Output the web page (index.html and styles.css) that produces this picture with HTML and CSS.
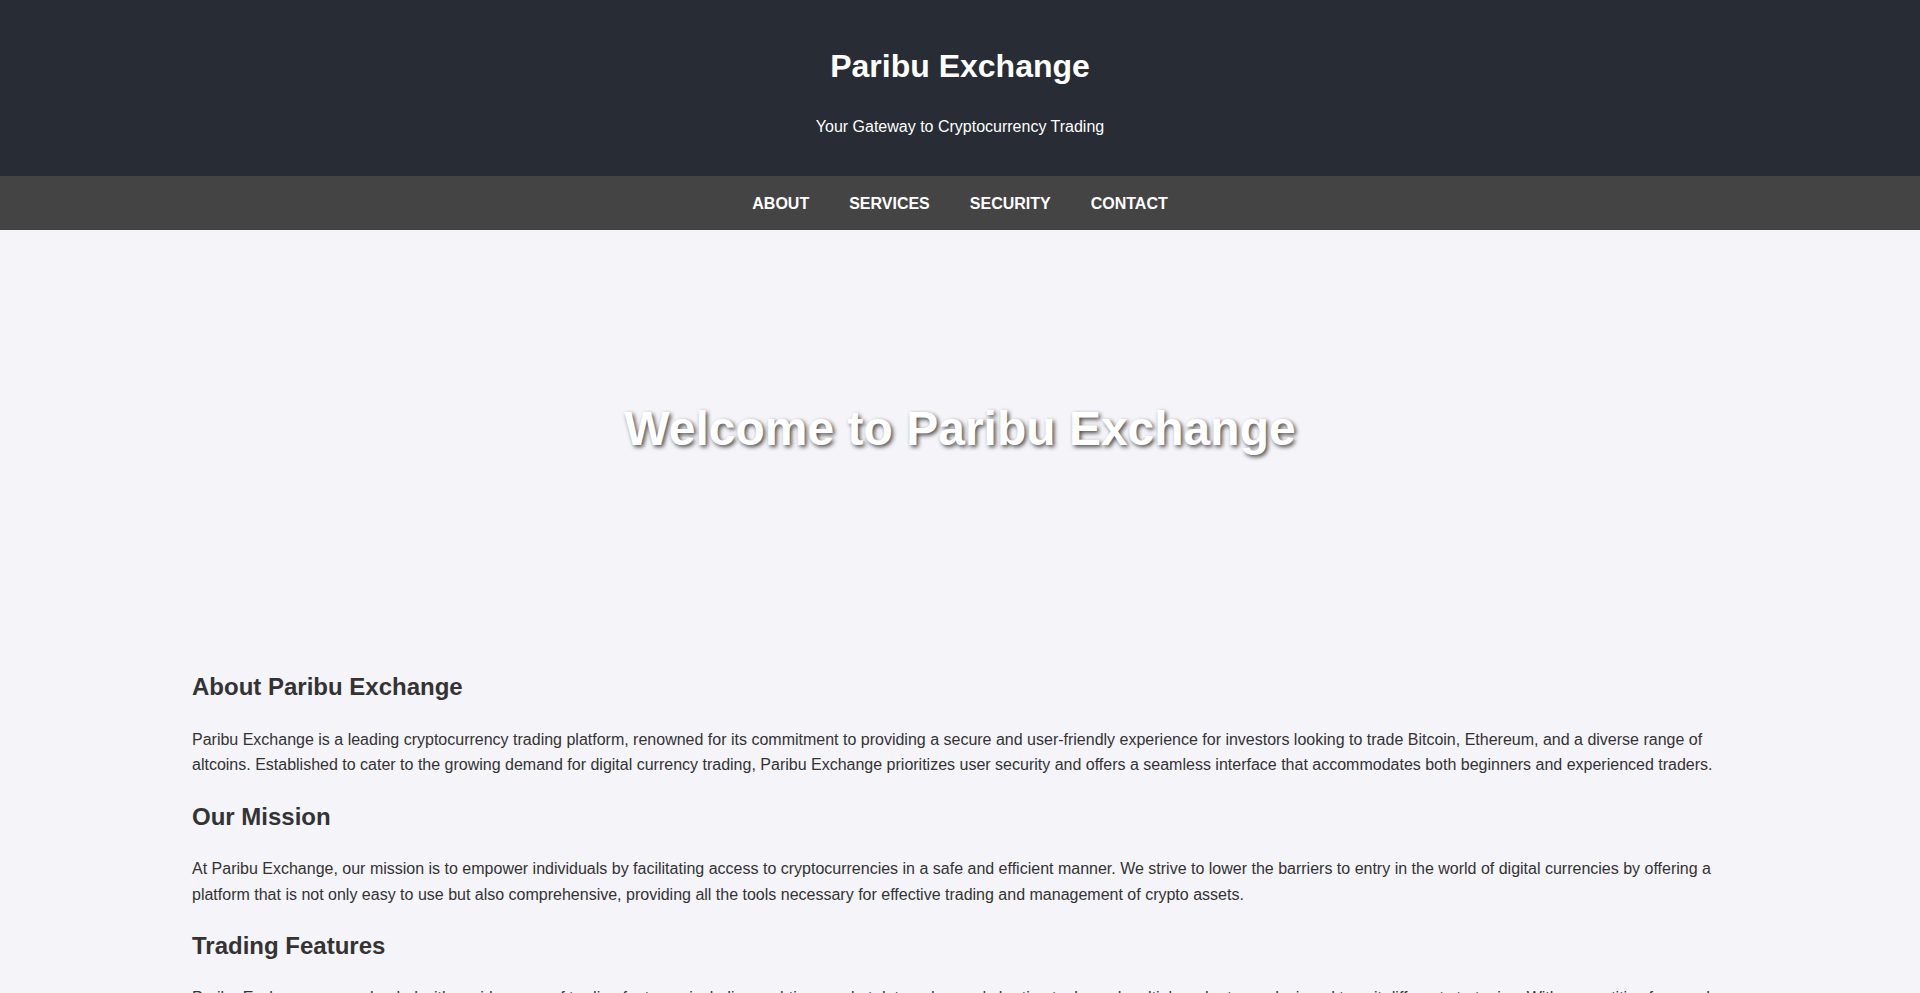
FILE: index.html
```html
<!DOCTYPE html>
<html lang="en">
<head>
<meta charset="UTF-8">
<title>Paribu Exchange</title>
<link rel="stylesheet" href="styles.css">
</head>
<body>
<header class="site-header">
  <h1 class="site-title">Paribu Exchange</h1>
  <p class="site-tagline">Your Gateway to Cryptocurrency Trading</p>
</header>
<nav class="site-nav">
  <a href="#about">About</a>
  <a href="#services">Services</a>
  <a href="#security">Security</a>
  <a href="#contact">Contact</a>
</nav>
<section class="hero">
  <h2 class="hero-title">Welcome to Paribu Exchange</h2>
</section>
<main class="content">
  <section id="about">
    <h2>About Paribu Exchange</h2>
    <p>Paribu Exchange is a leading cryptocurrency trading platform, renowned for its commitment to providing a secure and user-friendly experience for investors looking to trade Bitcoin, Ethereum, and a diverse range of altcoins. Established to cater to the growing demand for digital currency trading, Paribu Exchange prioritizes user security and offers a seamless interface that accommodates both beginners and experienced traders.</p>
  </section>
  <section id="mission">
    <h2>Our Mission</h2>
    <p>At Paribu Exchange, our mission is to empower individuals by facilitating access to cryptocurrencies in a safe and efficient manner. We strive to lower the barriers to entry in the world of digital currencies by offering a platform that is not only easy to use but also comprehensive, providing all the tools necessary for effective trading and management of crypto assets.</p>
  </section>
  <section id="services">
    <h2>Trading Features</h2>
    <p>Paribu Exchange comes loaded with a wide range of trading features, including real-time market data, advanced charting tools, and multiple order types designed to suit different strategies. With competitive fees and deep liquidity, traders can execute orders quickly and with confidence across every supported market.</p>
  </section>
</main>
</body>
</html>
```

FILE: styles.css
```css
html, body {
  margin: 0;
  padding: 0;
}

body {
  font-family: "Liberation Sans", Arial, sans-serif;
  line-height: 1.6;
  background: #f4f4f9;
  color: #333;
}

.site-header {
  background: #282c34;
  color: #fff;
  text-align: center;
  padding: 20px 20px 20px;
}

.site-title {
  font-size: 32px;
  margin: 21px 0 22px;
}

.site-tagline {
  font-size: 16px;
  margin: 0 0 16px;
}

.site-nav {
  background: #444;
  display: flex;
  justify-content: center;
  padding: 15px 0 14px;
}

.site-nav a {
  color: #fff;
  text-decoration: none;
  text-transform: uppercase;
  font-weight: bold;
  font-size: 16px;
  margin: 0 20px;
}

.hero {
  height: 399px;
  display: flex;
  align-items: center;
  justify-content: center;
}

.hero-title {
  margin: 0;
  font-size: 48px;
  color: #fff;
  text-shadow: 2px 2px 4px rgba(0, 0, 0, 0.7);
}

.content {
  width: 80%;
  margin: 0 auto;
  padding: 19px 0 20px;
}

.content h2 {
  font-size: 24px;
  margin: 19.92px 0;
}

.content p {
  font-size: 16px;
  margin: 16px 0;
}
```
